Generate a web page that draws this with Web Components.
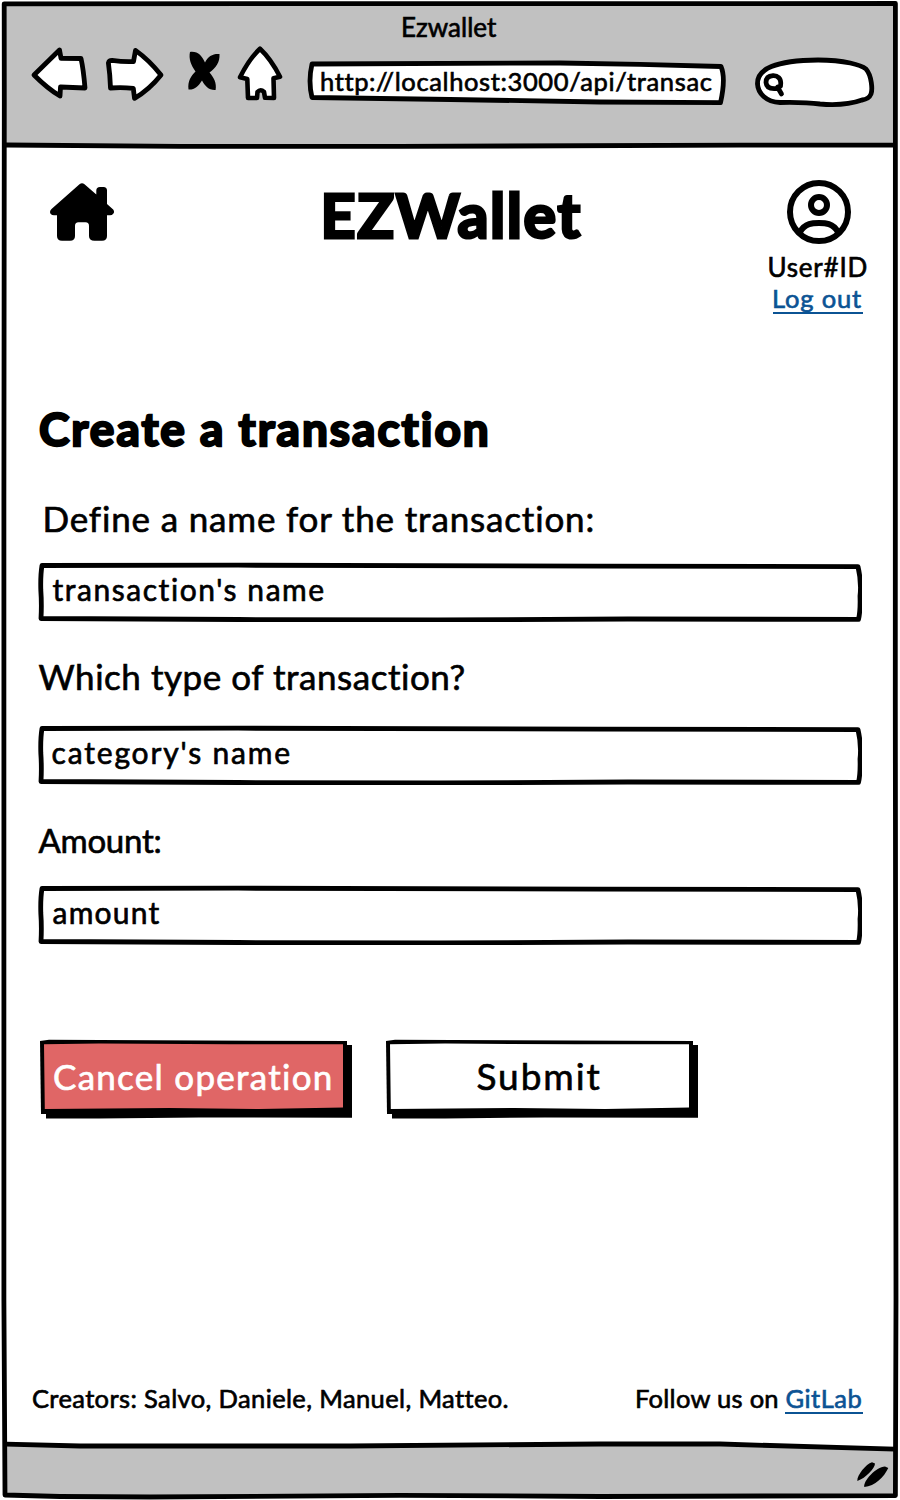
<!DOCTYPE html>
<html lang="en">
<head>
<meta charset="utf-8">
<title>Ezwallet</title>
<style>
html,body{margin:0;background:#fff}
body{width:900px;height:1500px;overflow:hidden;font-family:Lato,"Open Sans",sans-serif;color:#000}
</style>
</head>
<body>
<wallet-app></wallet-app>
<script>
const define = (name, html, connected) => {
  const t = document.createElement('template');
  t.innerHTML = html;
  customElements.define(name, class extends HTMLElement {
    constructor() { super(); this.attachShadow({mode: 'open'}).appendChild(t.content.cloneNode(true)); }
    connectedCallback() { if (connected) connected.call(this, this.shadowRoot); }
  });
};

/* One line of text, letter-spaced so that its ink fills the given width. */
const ctx = document.createElement('canvas').getContext('2d');
define('sk-text', `
<style>
:host{display:block;flex:none;font-variant-ligatures:none}
span{display:block;width:max-content;white-space:pre;-webkit-text-stroke:var(--ink,.65px) currentColor;paint-order:stroke;stroke-linejoin:round}
</style><span><slot></slot></span>`, function (root) {
  const size = +this.getAttribute('size'), w = +this.getAttribute('w');
  const weight = this.getAttribute('weight') || 400, text = this.textContent;
  ctx.font = `${weight} ${size}px Lato, "Open Sans", sans-serif`;
  ctx.letterSpacing = '0.01px';
  const m = ctx.measureText(text);
  const gap = (w - m.actualBoundingBoxRight - m.actualBoundingBoxLeft) / (text.length - 1);
  this.style.cssText += `;width:${w}px;font-size:${size}px;line-height:${size * 1.2}px;height:${size * 1.2}px;font-weight:${weight}`;
  const s = root.querySelector('span');
  s.style.letterSpacing = gap + 'px';
  s.style.marginLeft = m.actualBoundingBoxLeft + 'px';
});

define('sk-link', `
<style>
:host{display:block;flex:none;color:#0b5394;height:var(--h,29px);box-sizing:border-box;padding:0 1.5px;border-bottom:2px solid #0b5394}
</style><slot></slot>`);

define('sk-field', `
<style>
:host{display:flex;position:relative;width:824px;height:60px;box-sizing:border-box;padding:9px 0 0 14.5px}
svg{position:absolute;inset:0}
::slotted(*){position:relative}
</style>
<svg width="824" height="60" viewBox="0 0 824 60" fill="#fff" stroke="#000" stroke-width="4.8" stroke-linejoin="round">
<path d="M4 3.5L200 3.2L560 4.2L820 4.6Q823.6 20 822 34Q822.5 49 820.5 57.4L590 57L400 58L200 57.5L3 56.5Q3.8 42 2.8 28Q2.4 13 4 3.5Z"/>
</svg><slot></slot>`);

define('sk-button', `
<style>
:host{display:flex;justify-content:center;position:relative;width:314px;height:80px;flex:none;color:var(--fg,#000);box-sizing:border-box;padding-top:var(--pt,15px);padding-right:7px}
svg{position:absolute;inset:0}
::slotted(*){position:relative}
</style>
<svg width="314" height="80" viewBox="0 0 314 80">
<path d="M7 6H313V78.8L160 78.5L60 79.5H7Z"/>
<path d="M1 2L10 .8L308 2V75H2Z"/>
<path d="M5 5.2L60 4.6L190 5.3H304V68.5L220 70L130 69L5.8 70Z" style="fill:var(--bg,#fff)"/>
</svg><slot></slot>`);

define('window-frame', `
<style>:host{position:absolute;inset:0}svg{display:block}</style>
<svg width="900" height="1500" viewBox="0 0 900 1500" stroke-linejoin="round">
<path fill="#c1c1c1" d="M4 4H895V145H4ZM4 1444.5L80 1446L600 1444.5L895 1449V1496H4Z"/>
<g fill="none" stroke="#000" stroke-width="4.8">
<path d="M4.2 3.8L500 3.6L895.4 3.5L895.3 700L896 1300L895.4 1495.6L600 1496.5L400 1495.3L150 1497L60 1496.5L5 1495L3.9 1300V500L4.3 100Z"/>
<path d="M6 145L180 146.4L400 146.4L740 145.2H895M6 1444.2L80 1446L350 1446L600 1444L720 1444L895 1449.2"/>
</g></svg>`);

define('browser-bar', `
<style>
:host{display:flex;flex-direction:column;height:146px;position:relative}
.title{margin:12px 0 1.8px 403px}
.row{display:flex;align-items:flex-start}
.row>svg{display:block;flex:none}
.url{display:flex;position:relative;width:422px;height:46px;box-sizing:border-box;padding:8px 0 0 15px;margin:13px 0 0 20px}
.url svg{position:absolute;inset:0}
.url sk-text{position:relative}
</style>
<sk-text class="title" size="26" w="94">Ezwallet</sk-text>
<div class="row">
<svg style="margin-left:30px" width="60" height="56" viewBox="30 45 60 56" fill="#fff" stroke="#000" stroke-width="4.8" stroke-linejoin="round"><path d="M34 75L59.5 50L61 58.3L81 58.5Q83.4 69 85 88L60.5 87L60 96Q48 89 34 75Z"/></svg>
<svg style="margin-left:14px" width="62" height="58" viewBox="104 45 62 58" fill="#fff" stroke="#000" stroke-width="4.8" stroke-linejoin="round"><path d="M108.4 63Q109 60.4 112 60.4Q124 62 133.5 61.5L135.5 50.4Q149 60 161 75Q149 90 134.5 98.3L133.3 88.4Q122 87 110.5 88Q110 74 108.4 63Z"/></svg>
<svg style="margin-left:20px" width="36" height="50" viewBox="186 45 36 50"><path d="M190 52C198 51 202 56 205 62.500C208 56 213 53.500 219.500 54C220 62 216 68 209.500 72.500C213.500 77 217 83 215.600 90C209 90.500 205 86 202 80.500C198 87 194 90 188.500 89.500C187.500 81 191 76 195.500 71.500C191 65 188.500 59 190 52Z"/></svg>
<svg style="margin-left:14px" width="50" height="58" viewBox="236 45 50 58" fill="#fff" stroke="#000" stroke-width="4.600" stroke-linejoin="round"><path d="M260 48.700Q271 59 280 76.700L273.500 78.300L274 98L265 97.800L264 92Q260.500 88.500 257.500 92L257 98L248 98L247.300 79L240 77.300Q249 59 260 48.700Z"/></svg>
<div class="url"><svg width="422" height="46" viewBox="306 58 422 46" overflow="visible" fill="#fff" stroke="#000" stroke-width="4.800" stroke-linejoin="round"><path d="M312 64L560 63L640 64.300L721 66.500Q726 78 720.500 102.700L600 102L450 99.500L312 97.500Q308 81 312 64Z"/></svg><sk-text size="25.500" w="391">http://localhost:3000/api/transac</sk-text></div>
<svg style="margin:11px 0 0 24px" width="126" height="52" viewBox="752 56 126 52" fill="#fff" stroke="#000" stroke-width="4.800" stroke-linecap="round"><path d="M757.500 84C757 69 775 60.500 818 60C845 60 861 65 866 69C872 76 872.500 90 871 94Q869 99 862 100C848 105 832 105 820 104Q805 102 780 102.500C766 102 758 93 757.500 84Z"/><path stroke-width="4.800" d="M780.500 86C782 78 777 75.500 773 75.700C768 76 766 79 766 82.500C766.500 88 771 89 776 88.600M777.500 87L781.500 94M776 88.600L780.500 86"/></svg>
</div>`);

define('app-header', `
<style>
:host{display:flex;align-items:flex-start;height:226px;position:relative}
svg{display:block;flex:none}
.home{margin:34px 0 0 48px}
.brand{--ink:3px;margin:32px 0 0 208.500px}
.user{display:flex;flex-direction:column;align-items:center;width:102px;margin:32px 0 0 186.500px}
.user svg{margin-left:2px}
.user sk-text{margin-top:5.500px}
.user sk-link{margin-top:0;margin-right:1px;--h:31px}
.user sk-link sk-text{margin-top:0}
</style>
<svg class="home" width="68" height="64" viewBox="48 180 68 64"><path d="M79.500 184.300Q82 182.300 84.500 184.300L96.300 194.500V190.500Q96.300 187 100 187H103.500Q107 187 107 190.500V204L113.200 209.500Q115 212 113 214Q112 215.300 110 215.300H107V236Q107 240.800 102 240.800H94.500Q89 240.800 89 236V226Q89 222.300 85.500 222.300H78.500Q75 222.300 75 226V236Q75 240.800 70 240.800H62Q57 240.800 57 236V215.300H54Q50 215 50 212Q50 210.500 51.500 209Z"/></svg>
<sk-text class="brand" size="61" weight="700" w="256">EZWallet</sk-text>
<div class="user">
<svg width="68" height="68" viewBox="784 178 68 68" fill="none" stroke="#000" stroke-width="6"><circle cx="818" cy="212" r="29"/><circle cx="818" cy="205" r="8"/><path d="M799 232C804 223 812 223 818 223S832 223 837 232"/></svg>
<sk-text size="26" w="97">User#ID</sk-text>
<sk-link><sk-text size="25.500" w="87">Log out</sk-text></sk-link>
</div>`);

define('transaction-form', `
<style>
:host{display:block;padding-left:38px;position:relative}
.h{--ink:2.400px;margin-left:2px;padding-top:28.500px}
.l1{margin:41.500px 0 0 7.500px}
.f1{margin-top:22.800px}
.l2{margin:33.500px 0 0 .500px}
.f2{margin-top:27.500px}
.l3{margin:36px 0 0 .500px}
.f3{margin-top:24px}
.buttons{display:flex;gap:32px;margin:94.700px 0 0 1px}
.cancel{--bg:#e06666;--fg:#fff;--pt:15.500px}
.submit{--pt:15px}
</style>
<sk-text class="h" size="46" weight="700" w="447">Create a transaction</sk-text>
<sk-text class="l1" size="35" w="548">Define a name for the transaction:</sk-text>
<sk-field class="f1"><sk-text size="30" w="271">transaction's name</sk-text></sk-field>
<sk-text class="l2" size="35" w="427">Which type of transaction?</sk-text>
<sk-field class="f2"><sk-text size="30" w="237">category's name</sk-text></sk-field>
<sk-text class="l3" size="33" w="122">Amount:</sk-text>
<sk-field class="f3"><sk-text size="30" w="107">amount</sk-text></sk-field>
<div class="buttons">
<sk-button class="cancel"><sk-text size="35" w="277">Cancel operation</sk-text></sk-button>
<sk-button class="submit"><sk-text size="37" w="122">Submit</sk-text></sk-button>
</div>`);

define('app-footer', `
<style>
:host{display:flex;align-items:flex-start;margin-top:auto;height:61px;padding:0 37px 0 33px;position:relative}
.follow{margin-left:auto}
sk-link{margin-left:7px;--h:30.500px}
</style>
<sk-text size="25.500" w="475">Creators: Salvo, Daniele, Manuel, Matteo.</sk-text>
<sk-text class="follow" size="25.500" w="141">Follow us on</sk-text>
<sk-link><sk-text size="25.500" w="75">GitLab</sk-text></sk-link>`);

define('status-bar', `
<style>
:host{display:flex;justify-content:flex-end;height:56px;box-sizing:border-box;padding:16px 10px 0 0;position:relative}
</style>
<svg width="34" height="30" viewBox="856 1460 34 30"><path d="M857.300 1481C857 1475 866 1464 872 1462.200L875 1463.500C875 1468 866 1478 857.300 1481ZM864.300 1487C863 1481 876 1467 885 1466.500L888.300 1468C884 1477 875 1486 864.300 1487Z"/></svg>`);

define('wallet-app', `
<style>
:host{display:flex;flex-direction:column;position:relative;width:900px;height:1500px;overflow:hidden}
</style>
<window-frame></window-frame>
<browser-bar></browser-bar>
<app-header></app-header>
<transaction-form></transaction-form>
<app-footer></app-footer>
<status-bar></status-bar>`);
</script>
</body>
</html>
